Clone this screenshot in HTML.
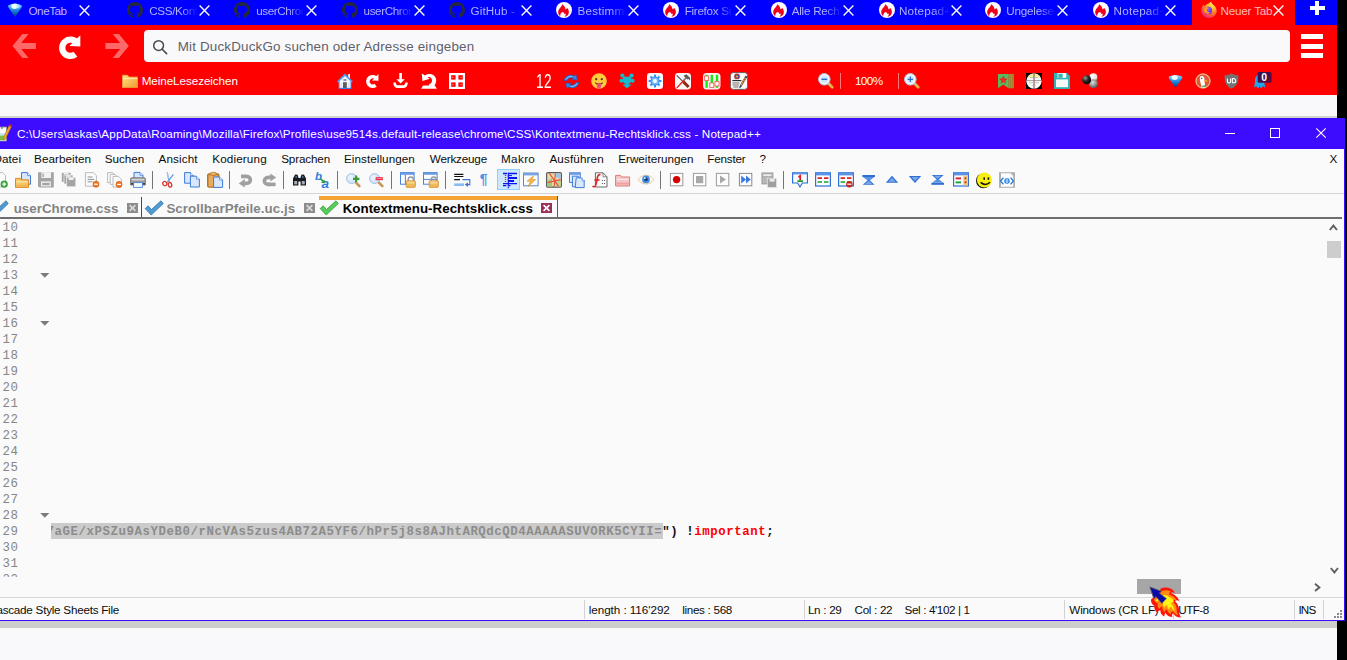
<!DOCTYPE html>
<html lang="de">
<head>
<meta charset="utf-8">
<title>Kontextmenu-Rechtsklick.css - Notepad++</title>
<style>
html,body{margin:0;padding:0;}
body{width:1347px;height:660px;overflow:hidden;position:relative;background:#f9f9fb;font-family:"Liberation Sans","DejaVu Sans",sans-serif;}
div,span.a,svg{position:absolute;white-space:nowrap;}
svg{overflow:visible;}
#black{left:1337px;top:0;width:10px;height:660px;background:#000;}
#tabbar{left:0;top:0;width:1337px;height:25px;background:#0000ff;}
#navbar{left:0;top:25px;width:1337px;height:70px;background:#ff0000;}
#seltab{left:1192px;top:0;width:103px;height:25px;background:#ff0000;}
.tl{top:0;height:23px;line-height:22px;font-size:11.7px;letter-spacing:-0.42px;overflow:hidden;}
#urlbar{left:144px;top:30px;width:1146px;height:32px;background:#f9f9fb;border-radius:4px;}
#gapline{left:0;top:116px;width:1337px;height:2px;background:#d2d2cc;}
#npp{left:0;top:118px;width:1345px;height:503px;background:#fafafa;}
#npp-title{left:0;top:118px;width:1345px;height:31px;background:#3d0cff;}
#below{left:0;top:621px;width:1337px;height:7px;background:#cdcdcd;}
.ln{left:2.4px;width:30px;line-height:16px;font-family:"Liberation Mono","DejaVu Sans Mono",monospace;font-size:12.4px;letter-spacing:0.56px;color:#868686;overflow:hidden;}
#code{height:16px;line-height:16px;font-family:"Liberation Mono","DejaVu Sans Mono",monospace;font-size:12.4px;letter-spacing:0.56px;font-weight:bold;color:#8c8c8c;}
#code .k{color:#101020;} #code .r{color:#ff0000;}
</style>
</head>
<body>
<div id="black"></div><div id="tabbar"></div><div id="navbar"></div><div id="seltab"></div>
<svg style="left:6.5px;top:2px;" width="16" height="16" viewBox="0 0 16 16"><defs><linearGradient id="ot6" x1="0" y1="0" x2="0" y2="1"><stop offset="0" stop-color="#7fe3ff"/><stop offset="0.45" stop-color="#1e8fe8"/><stop offset="1" stop-color="#06307a"/></linearGradient></defs>
<path d="M1.3 3.4 Q8 -0.6 14.7 3.4 Q15.3 4.2 14.6 5.2 L9 13.4 L8.2 15.2 L7 13.4 L1.4 5.2 Q0.7 4.2 1.3 3.4Z" fill="url(#ot6)"/>
<ellipse cx="7.6" cy="4.3" rx="3.3" ry="2.6" fill="#fff" opacity="0.92"/><ellipse cx="11" cy="4.6" rx="2" ry="1.8" fill="#bfe9ff" opacity="0.7"/></svg>
<div class="tl" style="left:28.5px;width:48.5px;color:#c2b4ff;letter-spacing:-0.48px;">OneTab</div>
<svg style="left:78.5px;top:5px;" width="11" height="11" viewBox="0 0 11 11"><path d="M0.6 0.6L10.4 10.4M10.4 0.6L0.6 10.4" stroke="#fff" stroke-width="1.35" fill="none"/></svg>
<svg style="left:127px;top:2px;" width="16" height="16" viewBox="0 0 16 16"><path d="M8 0C3.58 0 0 3.58 0 8c0 3.54 2.29 6.53 5.47 7.59.4.07.55-.17.55-.38 0-.19-.01-.82-.01-1.49-2.01.37-2.53-.49-2.69-.94-.09-.23-.48-.94-.82-1.13-.28-.15-.68-.52-.01-.53.63-.01 1.08.58 1.23.82.72 1.21 1.87.87 2.33.66.07-.52.28-.87.51-1.07-1.78-.2-3.64-.89-3.64-3.95 0-.87.31-1.59.82-2.15-.08-.2-.36-1.02.08-2.12 0 0 .67-.21 2.2.82.64-.18 1.32-.27 2-.27.68 0 1.36.09 2 .27 1.53-1.04 2.2-.82 2.2-.82.44 1.1.16 1.92.08 2.12.51.56.82 1.27.82 2.15 0 3.07-1.87 3.75-3.65 3.95.29.25.54.73.54 1.48 0 1.07-.01 1.93-.01 2.2 0 .21.15.46.55.38A8.013 8.013 0 0016 8c0-4.42-3.58-8-8-8z" fill="#26283a"/></svg>
<div class="tl" style="left:149.3px;width:48.2px;color:#b0b0ff;letter-spacing:-0.367px;-webkit-mask-image:linear-gradient(to right,#000 68%,rgba(0,0,0,0.02) 100%);mask-image:linear-gradient(to right,#000 68%,rgba(0,0,0,0.02) 100%);">CSS/Kontextmenu</div>
<svg style="left:199px;top:5px;" width="11" height="11" viewBox="0 0 11 11"><path d="M0.6 0.6L10.4 10.4M10.4 0.6L0.6 10.4" stroke="#fff" stroke-width="1.35" fill="none"/></svg>
<svg style="left:234px;top:2px;" width="16" height="16" viewBox="0 0 16 16"><path d="M8 0C3.58 0 0 3.58 0 8c0 3.54 2.29 6.53 5.47 7.59.4.07.55-.17.55-.38 0-.19-.01-.82-.01-1.49-2.01.37-2.53-.49-2.69-.94-.09-.23-.48-.94-.82-1.13-.28-.15-.68-.52-.01-.53.63-.01 1.08.58 1.23.82.72 1.21 1.87.87 2.33.66.07-.52.28-.87.51-1.07-1.78-.2-3.64-.89-3.64-3.95 0-.87.31-1.59.82-2.15-.08-.2-.36-1.02.08-2.12 0 0 .67-.21 2.2.82.64-.18 1.32-.27 2-.27.68 0 1.36.09 2 .27 1.53-1.04 2.2-.82 2.2-.82.44 1.1.16 1.92.08 2.12.51.56.82 1.27.82 2.15 0 3.07-1.87 3.75-3.65 3.95.29.25.54.73.54 1.48 0 1.07-.01 1.93-.01 2.2 0 .21.15.46.55.38A8.013 8.013 0 0016 8c0-4.42-3.58-8-8-8z" fill="#26283a"/></svg>
<div class="tl" style="left:256.2px;width:48.3px;color:#b0b0ff;letter-spacing:-0.417px;-webkit-mask-image:linear-gradient(to right,#000 68%,rgba(0,0,0,0.02) 100%);mask-image:linear-gradient(to right,#000 68%,rgba(0,0,0,0.02) 100%);">userChrome.css</div>
<svg style="left:306px;top:5px;" width="11" height="11" viewBox="0 0 11 11"><path d="M0.6 0.6L10.4 10.4M10.4 0.6L0.6 10.4" stroke="#fff" stroke-width="1.35" fill="none"/></svg>
<svg style="left:341.5px;top:2px;" width="16" height="16" viewBox="0 0 16 16"><path d="M8 0C3.58 0 0 3.58 0 8c0 3.54 2.29 6.53 5.47 7.59.4.07.55-.17.55-.38 0-.19-.01-.82-.01-1.49-2.01.37-2.53-.49-2.69-.94-.09-.23-.48-.94-.82-1.13-.28-.15-.68-.52-.01-.53.63-.01 1.08.58 1.23.82.72 1.21 1.87.87 2.33.66.07-.52.28-.87.51-1.07-1.78-.2-3.64-.89-3.64-3.95 0-.87.31-1.59.82-2.15-.08-.2-.36-1.02.08-2.12 0 0 .67-.21 2.2.82.64-.18 1.32-.27 2-.27.68 0 1.36.09 2 .27 1.53-1.04 2.2-.82 2.2-.82.44 1.1.16 1.92.08 2.12.51.56.82 1.27.82 2.15 0 3.07-1.87 3.75-3.65 3.95.29.25.54.73.54 1.48 0 1.07-.01 1.93-.01 2.2 0 .21.15.46.55.38A8.013 8.013 0 0016 8c0-4.42-3.58-8-8-8z" fill="#26283a"/></svg>
<div class="tl" style="left:363.6px;width:48.4px;color:#b0b0ff;letter-spacing:-0.417px;-webkit-mask-image:linear-gradient(to right,#000 68%,rgba(0,0,0,0.02) 100%);mask-image:linear-gradient(to right,#000 68%,rgba(0,0,0,0.02) 100%);">userChrome.css</div>
<svg style="left:413.5px;top:5px;" width="11" height="11" viewBox="0 0 11 11"><path d="M0.6 0.6L10.4 10.4M10.4 0.6L0.6 10.4" stroke="#fff" stroke-width="1.35" fill="none"/></svg>
<svg style="left:449px;top:2px;" width="16" height="16" viewBox="0 0 16 16"><path d="M8 0C3.58 0 0 3.58 0 8c0 3.54 2.29 6.53 5.47 7.59.4.07.55-.17.55-.38 0-.19-.01-.82-.01-1.49-2.01.37-2.53-.49-2.69-.94-.09-.23-.48-.94-.82-1.13-.28-.15-.68-.52-.01-.53.63-.01 1.08.58 1.23.82.72 1.21 1.87.87 2.33.66.07-.52.28-.87.51-1.07-1.78-.2-3.64-.89-3.64-3.95 0-.87.31-1.59.82-2.15-.08-.2-.36-1.02.08-2.12 0 0 .67-.21 2.2.82.64-.18 1.32-.27 2-.27.68 0 1.36.09 2 .27 1.53-1.04 2.2-.82 2.2-.82.44 1.1.16 1.92.08 2.12.51.56.82 1.27.82 2.15 0 3.07-1.87 3.75-3.65 3.95.29.25.54.73.54 1.48 0 1.07-.01 1.93-.01 2.2 0 .21.15.46.55.38A8.013 8.013 0 0016 8c0-4.42-3.58-8-8-8z" fill="#26283a"/></svg>
<div class="tl" style="left:470.5px;width:49.0px;color:#b0b0ff;letter-spacing:0.12px;-webkit-mask-image:linear-gradient(to right,#000 68%,rgba(0,0,0,0.02) 100%);mask-image:linear-gradient(to right,#000 68%,rgba(0,0,0,0.02) 100%);">GitHub - Endor8</div>
<svg style="left:521px;top:5px;" width="11" height="11" viewBox="0 0 11 11"><path d="M0.6 0.6L10.4 10.4M10.4 0.6L0.6 10.4" stroke="#fff" stroke-width="1.35" fill="none"/></svg>
<svg style="left:556px;top:2px;" width="16" height="16" viewBox="0 0 16 16"><circle cx="8" cy="8" r="8" fill="#fdfdff"/>
<path d="M6.3 2.2 C8.4 3.6 9.6 5.6 9.4 7.4 C10 6.8 10.9 6.6 11.3 5.9 C12.6 7.6 13.4 9.8 12.6 11.8 C11.9 13.6 10.1 14.8 8.2 14.9 C9.6 13.9 10 12.6 9.5 11.4 L8.3 12 C8.2 10.9 7.4 10.1 6.4 10 C5 10.9 4 12.6 4.3 14.2 C2.6 13 1.9 11 2.3 9 C2.8 6.4 5.6 5.2 6.3 2.2Z" fill="#f00018"/></svg>
<div class="tl" style="left:577.4px;width:49.1px;color:#b0b0ff;letter-spacing:0.25px;-webkit-mask-image:linear-gradient(to right,#000 68%,rgba(0,0,0,0.02) 100%);mask-image:linear-gradient(to right,#000 68%,rgba(0,0,0,0.02) 100%);">Bestimmte Eintr</div>
<svg style="left:628px;top:5px;" width="11" height="11" viewBox="0 0 11 11"><path d="M0.6 0.6L10.4 10.4M10.4 0.6L0.6 10.4" stroke="#fff" stroke-width="1.35" fill="none"/></svg>
<svg style="left:663px;top:2px;" width="16" height="16" viewBox="0 0 16 16"><circle cx="8" cy="8" r="8" fill="#fdfdff"/>
<path d="M6.3 2.2 C8.4 3.6 9.6 5.6 9.4 7.4 C10 6.8 10.9 6.6 11.3 5.9 C12.6 7.6 13.4 9.8 12.6 11.8 C11.9 13.6 10.1 14.8 8.2 14.9 C9.6 13.9 10 12.6 9.5 11.4 L8.3 12 C8.2 10.9 7.4 10.1 6.4 10 C5 10.9 4 12.6 4.3 14.2 C2.6 13 1.9 11 2.3 9 C2.8 6.4 5.6 5.2 6.3 2.2Z" fill="#f00018"/></svg>
<div class="tl" style="left:684.7px;width:48.8px;color:#b0b0ff;letter-spacing:-0.3px;-webkit-mask-image:linear-gradient(to right,#000 68%,rgba(0,0,0,0.02) 100%);mask-image:linear-gradient(to right,#000 68%,rgba(0,0,0,0.02) 100%);">Firefox Suche</div>
<svg style="left:735px;top:5px;" width="11" height="11" viewBox="0 0 11 11"><path d="M0.6 0.6L10.4 10.4M10.4 0.6L0.6 10.4" stroke="#fff" stroke-width="1.35" fill="none"/></svg>
<svg style="left:771px;top:2px;" width="16" height="16" viewBox="0 0 16 16"><circle cx="8" cy="8" r="8" fill="#fdfdff"/>
<path d="M6.3 2.2 C8.4 3.6 9.6 5.6 9.4 7.4 C10 6.8 10.9 6.6 11.3 5.9 C12.6 7.6 13.4 9.8 12.6 11.8 C11.9 13.6 10.1 14.8 8.2 14.9 C9.6 13.9 10 12.6 9.5 11.4 L8.3 12 C8.2 10.9 7.4 10.1 6.4 10 C5 10.9 4 12.6 4.3 14.2 C2.6 13 1.9 11 2.3 9 C2.8 6.4 5.6 5.2 6.3 2.2Z" fill="#f00018"/></svg>
<div class="tl" style="left:791.7px;width:49.8px;color:#b0b0ff;letter-spacing:-0.25px;-webkit-mask-image:linear-gradient(to right,#000 68%,rgba(0,0,0,0.02) 100%);mask-image:linear-gradient(to right,#000 68%,rgba(0,0,0,0.02) 100%);">Alle Rechtsklick</div>
<svg style="left:843px;top:5px;" width="11" height="11" viewBox="0 0 11 11"><path d="M0.6 0.6L10.4 10.4M10.4 0.6L0.6 10.4" stroke="#fff" stroke-width="1.35" fill="none"/></svg>
<svg style="left:878.5px;top:2px;" width="16" height="16" viewBox="0 0 16 16"><circle cx="8" cy="8" r="8" fill="#fdfdff"/>
<path d="M6.3 2.2 C8.4 3.6 9.6 5.6 9.4 7.4 C10 6.8 10.9 6.6 11.3 5.9 C12.6 7.6 13.4 9.8 12.6 11.8 C11.9 13.6 10.1 14.8 8.2 14.9 C9.6 13.9 10 12.6 9.5 11.4 L8.3 12 C8.2 10.9 7.4 10.1 6.4 10 C5 10.9 4 12.6 4.3 14.2 C2.6 13 1.9 11 2.3 9 C2.8 6.4 5.6 5.2 6.3 2.2Z" fill="#f00018"/></svg>
<div class="tl" style="left:898.9px;width:50.1px;color:#b0b0ff;letter-spacing:0.167px;-webkit-mask-image:linear-gradient(to right,#000 68%,rgba(0,0,0,0.02) 100%);mask-image:linear-gradient(to right,#000 68%,rgba(0,0,0,0.02) 100%);">Notepad++ und</div>
<svg style="left:950.5px;top:5px;" width="11" height="11" viewBox="0 0 11 11"><path d="M0.6 0.6L10.4 10.4M10.4 0.6L0.6 10.4" stroke="#fff" stroke-width="1.35" fill="none"/></svg>
<svg style="left:985px;top:2px;" width="16" height="16" viewBox="0 0 16 16"><circle cx="8" cy="8" r="8" fill="#fdfdff"/>
<path d="M6.3 2.2 C8.4 3.6 9.6 5.6 9.4 7.4 C10 6.8 10.9 6.6 11.3 5.9 C12.6 7.6 13.4 9.8 12.6 11.8 C11.9 13.6 10.1 14.8 8.2 14.9 C9.6 13.9 10 12.6 9.5 11.4 L8.3 12 C8.2 10.9 7.4 10.1 6.4 10 C5 10.9 4 12.6 4.3 14.2 C2.6 13 1.9 11 2.3 9 C2.8 6.4 5.6 5.2 6.3 2.2Z" fill="#f00018"/></svg>
<div class="tl" style="left:1006.3px;width:49.2px;color:#b0b0ff;letter-spacing:-0.229px;-webkit-mask-image:linear-gradient(to right,#000 68%,rgba(0,0,0,0.02) 100%);mask-image:linear-gradient(to right,#000 68%,rgba(0,0,0,0.02) 100%);">Ungelesene Beitr</div>
<svg style="left:1057px;top:5px;" width="11" height="11" viewBox="0 0 11 11"><path d="M0.6 0.6L10.4 10.4M10.4 0.6L0.6 10.4" stroke="#fff" stroke-width="1.35" fill="none"/></svg>
<svg style="left:1092.5px;top:2px;" width="16" height="16" viewBox="0 0 16 16"><circle cx="8" cy="8" r="8" fill="#fdfdff"/>
<path d="M6.3 2.2 C8.4 3.6 9.6 5.6 9.4 7.4 C10 6.8 10.9 6.6 11.3 5.9 C12.6 7.6 13.4 9.8 12.6 11.8 C11.9 13.6 10.1 14.8 8.2 14.9 C9.6 13.9 10 12.6 9.5 11.4 L8.3 12 C8.2 10.9 7.4 10.1 6.4 10 C5 10.9 4 12.6 4.3 14.2 C2.6 13 1.9 11 2.3 9 C2.8 6.4 5.6 5.2 6.3 2.2Z" fill="#f00018"/></svg>
<div class="tl" style="left:1113.6px;width:49.4px;color:#b0b0ff;letter-spacing:0.217px;-webkit-mask-image:linear-gradient(to right,#000 68%,rgba(0,0,0,0.02) 100%);mask-image:linear-gradient(to right,#000 68%,rgba(0,0,0,0.02) 100%);">Notepad++ und</div>
<svg style="left:1164.5px;top:5px;" width="11" height="11" viewBox="0 0 11 11"><path d="M0.6 0.6L10.4 10.4M10.4 0.6L0.6 10.4" stroke="#fff" stroke-width="1.35" fill="none"/></svg>
<svg style="left:1200.5px;top:2px;" width="16" height="16" viewBox="0 0 16 16"><defs><radialGradient id="fxa" cx="0.75" cy="0.1" r="1.05"><stop offset="0" stop-color="#fff44f"/><stop offset="0.3" stop-color="#ffbd2e"/><stop offset="0.62" stop-color="#ff6a2a"/><stop offset="1" stop-color="#e31587"/></radialGradient>
<radialGradient id="fxb" cx="0.5" cy="0.35" r="0.65"><stop offset="0" stop-color="#9059ff"/><stop offset="1" stop-color="#5b2bd6"/></radialGradient></defs>
<path d="M8.4 1 C9.2 0.2 9.8 -0.2 10.4 -0.2 C10.2 1.2 11.2 2 12.8 3.2 C15.2 5 16 7.6 15.6 10 C15 13.4 11.8 16 8 16 C3.6 16 0.2 12.6 0.2 8.4 C0.2 5.8 1.4 3.6 3 2.4 C3 3.2 3.2 3.8 3.6 4.2 C4.8 2.8 6.4 1.8 8.4 1Z" fill="url(#fxa)"/>
<circle cx="7.4" cy="8.4" r="3.7" fill="url(#fxb)"/>
<path d="M3.4 6.2 C4.8 5 7 5.2 8.4 6.2 C7 6.2 6.2 6.8 6 7.6 C5.6 9.2 7 10.6 9.2 10.4 C8 12 5.4 12.2 3.8 10.6 C2.7 9.4 2.6 7.4 3.4 6.2Z" fill="#ff9a2a"/></svg>
<div class="tl" style="left:1220.4px;width:54.6px;color:#ffb9b9;letter-spacing:-0.188px;">Neuer Tab</div>
<svg style="left:1272.5px;top:5px;" width="11" height="11" viewBox="0 0 11 11"><path d="M0.6 0.6L10.4 10.4M10.4 0.6L0.6 10.4" stroke="#fff" stroke-width="1.35" fill="none"/></svg>
<div style="left:1309.7px;top:5.8px;width:15px;height:4.1px;background:#fdfdff;"></div>
<div style="left:1315px;top:0.8px;width:4.4px;height:14px;background:#fdfdff;"></div>
<svg style="left:10px;top:32px;" width="30" height="28" viewBox="0 0 30 28"><path d="M2.5 14 L12.4 2 L18.6 2 L11.2 11 L25.9 11 L25.9 17 L11.2 17 L18.6 26 L12.4 26Z" fill="#ff6868"/></svg>
<svg style="left:102.5px;top:32px;" width="30" height="28" viewBox="0 0 30 28"><path d="M25.8 14 L15.9 2 L9.7 2 L17.1 11 L2.4 11 L2.4 17 L17.1 17 L9.7 26 L15.9 26Z" fill="#ff6868"/></svg>
<svg style="left:58.5px;top:35px;" width="22.0" height="24.0" viewBox="0 0 22 24"><path d="M17.84 7.77 A8.17 8.17 0 1 0 16.43 19.24" fill="none" stroke="#fdfdfd" stroke-width="6.25"/><path d="M21.3 0.2 L21.3 11.4 L10.4 11.1Z" fill="#fdfdfd"/></svg>
<div id="urlbar"></div>
<svg style="left:152px;top:39px;" width="16" height="16" viewBox="0 0 16 16"><circle cx="6.6" cy="6.6" r="4.9" fill="none" stroke="#4a4a55" stroke-width="1.5"/><path d="M10.2 10.2L14.6 14.6" stroke="#4a4a55" stroke-width="1.6" stroke-linecap="round"/></svg>
<div id="url" style="left:177.65px;top:30px;height:33px;line-height:33px;font-size:13.4px;color:#5f5f6a;letter-spacing:0.183px;font-weight:normal;">Mit DuckDuckGo suchen oder Adresse eingeben</div>
<div style="left:1301px;top:34px;width:22px;height:5.3px;background:#fff;"></div>
<div style="left:1301px;top:43.5px;width:22px;height:5.3px;background:#fff;"></div>
<div style="left:1301px;top:52.6px;width:22px;height:5.3px;background:#fff;"></div>
<svg style="left:122px;top:74px;" width="16" height="14" viewBox="0 0 16 14"><defs><linearGradient id="fo" x1="0" y1="0" x2="1" y2="1"><stop offset="0" stop-color="#ffe08a"/><stop offset="1" stop-color="#f09a2c"/></linearGradient></defs>
<path d="M0.5 1.2 L5.6 1.2 L6.8 3 L15.5 3 L15.5 13.5 L0.5 13.5Z" fill="url(#fo)" stroke="#e8a33a" stroke-width="0.8"/><path d="M0.8 4.6 L15.2 4.6" stroke="#fff3c4" stroke-width="0.8"/></svg>
<div id="bm" style="left:141.70px;top:72px;height:18px;line-height:18px;font-size:11.7px;color:#fff;letter-spacing:-0.080px;font-weight:normal;">MeineLesezeichen</div>
<svg style="left:337px;top:73px;" width="16" height="16" viewBox="0 0 16 16"><rect x="11.2" y="1" width="1.8" height="4.4" fill="#f4f8ff"/>
<path d="M2.2 7.8 L8 2.4 L13.8 7.8 L13.8 15.2 L2.2 15.2Z" fill="#f7f8fb"/>
<path d="M0.2 8.2 L8 0.6 L15.8 8.2 L14.8 9.4 L8 3 L1.2 9.4Z" fill="#45a2ff"/>
<rect x="6" y="9.2" width="3.8" height="6" fill="#585d66"/><rect x="6.4" y="6" width="3" height="2" fill="#8a95a6"/>
<rect x="3.4" y="9.6" width="1.6" height="5" fill="#dfe4ec"/><rect x="10.8" y="9.6" width="1.6" height="5" fill="#dfe4ec"/>
<path d="M1.8 15.4 H14.2" stroke="#2f86ea" stroke-width="1.1"/><path d="M2.2 8.4 V15.2 M13.8 8.4 V15.2" stroke="#6ab4ff" stroke-width="0.9"/></svg>
<svg style="left:366px;top:74px;" width="12.87" height="14.04" viewBox="0 0 22 24"><path d="M17.84 7.77 A8.17 8.17 0 1 0 16.43 19.24" fill="none" stroke="#fdfdfd" stroke-width="6.25"/><path d="M21.3 0.2 L21.3 11.4 L10.4 11.1Z" fill="#fdfdfd"/></svg>
<svg style="left:393px;top:73px;" width="15" height="15" viewBox="0 0 15 15"><path d="M6.3 0 H8.9 V6.2 H11.8 L7.6 10.6 L3.4 6.2 H6.3Z" fill="#fff"/><path d="M0.3 9.6 C0.3 13 2 14.9 4 14.9 H11 C13 14.9 14.8 13 14.8 9.6 H12.2 C12.2 11.4 11.4 12.3 10.4 12.3 H4.6 C3.6 12.3 2.9 11.4 2.9 9.6Z" fill="#fff"/></svg>
<svg style="left:421px;top:73px;" width="16" height="16" viewBox="0 0 16 16"><path d="M0.8 0.4 L1.4 8 L8.8 5.8 L6.6 4.4 C8.6 3.4 11 4.8 11 7.4 C11 9.4 9.8 10.6 8.2 11 L8.2 13 L12.8 13 C14.4 11.6 15.2 9.6 15.2 7.4 C15.2 1.8 9 -1 4 2.4Z" fill="#fff"/><path d="M0.2 15.8 L2 12.4 L14 12.4 L15.8 15.8Z" fill="#fff"/></svg>
<svg style="left:449px;top:73px;" width="16" height="16" viewBox="0 0 16 16"><rect width="16" height="16" fill="#fff"/><rect x="2.2" y="2.2" width="4.4" height="4.4" fill="#f00"/><rect x="9.4" y="2.2" width="4.4" height="4.4" fill="#f00"/><rect x="2.2" y="9.4" width="4.4" height="4.4" fill="#f00"/><rect x="9.4" y="9.4" width="4.4" height="4.4" fill="#f00"/><path d="M3.4 4.4 h1 M11.6 4.4 h1 M3.4 11.6 h1 M11.6 11.6 h1" stroke="#ffd0d0" stroke-width="0.9"/></svg>
<div id="t12" style="left:535.5px;top:70px;height:22px;line-height:22px;font-size:19.5px;color:#fff;transform-origin:0 50%;transform:scaleX(0.7);letter-spacing:0.5px;">12</div>
<svg style="left:562.5px;top:73.5px;" width="17" height="15" viewBox="0 0 17 15"><path d="M1 6.6 C1.6 2.8 5.4 0.6 9.2 1.2 L11.6 2 L12.8 0.4 L14.6 5.8 L9 5.8 L10.2 4.2 C7.6 3.2 4.8 4.2 4 6.6Z" fill="#2f86e6" stroke="#1b56b0" stroke-width="0.6"/>
<path d="M16 8.4 C15.4 12.2 11.6 14.4 7.8 13.8 L5.4 13 L4.2 14.6 L2.4 9.2 L8 9.2 L6.8 10.8 C9.4 11.8 12.2 10.8 13 8.4Z" fill="#2f86e6" stroke="#1b56b0" stroke-width="0.6"/>
<path d="M3 5.6 C4.2 3.2 6.8 2.2 9.4 2.6" stroke="#9fd0ff" stroke-width="0.9" fill="none"/><path d="M14 9.4 C12.8 11.8 10.2 12.8 7.6 12.4" stroke="#9fd0ff" stroke-width="0.9" fill="none"/></svg>
<svg style="left:591px;top:73px;" width="16" height="16" viewBox="0 0 16 16"><circle cx="8" cy="8" r="7.8" fill="#ffcb3d"/><circle cx="5.2" cy="6.2" r="1.15" fill="#5b3b14"/><circle cx="10.8" cy="6.2" r="1.15" fill="#5b3b14"/>
<path d="M3.8 9.2 Q8 11.4 12.2 9.2 Q11.6 11 10.4 11.6 L5.6 11.6 Q4.4 11 3.8 9.2Z" fill="#6b3a12"/>
<path d="M5.8 10.6 H10.2 V13.2 Q10.2 15.6 8 15.6 Q5.8 15.6 5.8 13.2Z" fill="#f0557a"/><path d="M8 11 V13.6" stroke="#d03a62" stroke-width="0.7"/></svg>
<svg style="left:619px;top:73px;" width="16" height="16" viewBox="0 0 16 16"><path d="M4.4 3.4 H11.6 L12.6 7 L11 10.4 H9.8 V11.6 H12.6 L8 15.6 L3.4 11.6 H6.2 V10.4 H5 L3.4 7Z" fill="#12bccc"/>
<circle cx="3.4" cy="2.6" r="2.1" fill="#12bccc"/><circle cx="12.6" cy="2.6" r="2.1" fill="#12bccc"/><circle cx="2.4" cy="7.8" r="2" fill="#12bccc"/><circle cx="13.6" cy="7.8" r="2" fill="#12bccc"/>
<path d="M6.6 3.4 L8 1.8 L9.4 3.4Z" fill="#f00"/></svg>
<svg style="left:647px;top:73px;" width="16" height="16" viewBox="0 0 16 16"><rect width="16" height="16" rx="3.2" fill="#f6f9ff"/><rect x="7" y="1.6" width="2" height="3" fill="#3a8eea" transform="rotate(0 8 8)"/><rect x="7" y="1.6" width="2" height="3" fill="#3a8eea" transform="rotate(45 8 8)"/><rect x="7" y="1.6" width="2" height="3" fill="#3a8eea" transform="rotate(90 8 8)"/><rect x="7" y="1.6" width="2" height="3" fill="#3a8eea" transform="rotate(135 8 8)"/><rect x="7" y="1.6" width="2" height="3" fill="#3a8eea" transform="rotate(180 8 8)"/><rect x="7" y="1.6" width="2" height="3" fill="#3a8eea" transform="rotate(225 8 8)"/><rect x="7" y="1.6" width="2" height="3" fill="#3a8eea" transform="rotate(270 8 8)"/><rect x="7" y="1.6" width="2" height="3" fill="#3a8eea" transform="rotate(315 8 8)"/><circle cx="8" cy="8" r="4.6" fill="#3a8eea"/><circle cx="8" cy="8" r="3.6" fill="#7fbcff"/><circle cx="8" cy="8" r="1.9" fill="#fff"/></svg>
<svg style="left:675px;top:72.8px;" width="16" height="16.4" viewBox="0 0 16 16.4"><rect width="16" height="16.4" rx="3.4" fill="#f9f9fb"/>
<path d="M2 2.6 L8 8.6" stroke="#585858" stroke-width="1.3" stroke-linecap="round"/><path d="M8.2 8.6 L13.6 14" stroke="#8c2a12" stroke-width="3"/>
<path d="M9.6 6.6 L2.2 14.6" stroke="#e8281c" stroke-width="1.4" stroke-linecap="round"/><path d="M9 7.2 L11.2 4.8" stroke="#777" stroke-width="1.4"/>
<path d="M8.6 2.8 L11.4 1.2 L15 4.8 L15.2 7.6 L13.6 6 L12.6 6.6 L9.4 3.8Z" fill="#5c5c5c"/></svg>
<svg style="left:702.5px;top:72.8px;" width="17.5" height="16.4" viewBox="0 0 17.5 16.4"><rect width="17.5" height="16.4" rx="3.6" fill="#fbeef0"/>
<rect x="2.4" y="1.8" width="2.4" height="13" fill="#12ec12"/><rect x="7.6" y="1.8" width="2.4" height="13" fill="#12ec12"/><rect x="12.8" y="1.8" width="2.4" height="13" fill="#12ec12"/>
<rect x="1.6" y="3" width="4" height="4.4" fill="#fff" stroke="#f06060" stroke-width="0.9"/><rect x="6.8" y="10" width="4" height="4.4" fill="#fff" stroke="#f06060" stroke-width="0.9"/><rect x="12" y="8.6" width="4" height="4.4" fill="#fff" stroke="#f06060" stroke-width="0.9"/></svg>
<svg style="left:730.2px;top:72px;" width="18" height="18" viewBox="0 0 18 18"><rect x="0.4" y="0.6" width="17.2" height="16.8" rx="3" fill="#fbfbfb" stroke="#4a4a4a" stroke-width="0.8"/>
<circle cx="7" cy="4.4" r="2.9" fill="#b83a3a"/><path d="M5 3 L9 6 M9 3 L5 6" stroke="#3a58b0" stroke-width="1.1"/><circle cx="7" cy="4.4" r="1" fill="#e8b040"/>
<path d="M2.4 8.6 H11.4" stroke="#222" stroke-width="1.1"/><path d="M2.4 11 H9.6 M2.4 13 H9 M3.4 15 H8.4" stroke="#707070" stroke-width="1"/>
<path d="M15.6 3.6 L17.4 4.8 L11.2 15 L9.2 16.4 L9.6 14Z" fill="#3a3a4a"/><path d="M15 5.4 L16.2 6.2 L11.4 13.8 L10.4 13Z" fill="#e8b030"/><path d="M14 7.2 L15.2 8 M12.8 9.2 L14 10 M11.6 11.2 L12.8 12" stroke="#c03030" stroke-width="0.9"/></svg>
<svg style="left:818px;top:73px;" width="16" height="16" viewBox="0 0 16 16"><path d="M10.6 10.6 L14.2 14.2" stroke="#e6b648" stroke-width="2.8" stroke-linecap="round"/><path d="M9.8 9.8 L11.4 11.4" stroke="#c9b48a" stroke-width="2.6"/>
<circle cx="6.3" cy="6.3" r="5.8" fill="#e6f2ff" stroke="#a8c0dc" stroke-width="1"/><circle cx="6.3" cy="6.3" r="4.3" fill="#d2e9ff" stroke="#fff" stroke-width="0.7"/><path d="M3.4 6.3 H9.2" stroke="#2a6cc8" stroke-width="1.5"/></svg>
<div style="left:840.3px;top:73px;width:1px;height:16px;background:#ff7a7a;"></div>
<div id="zoom" style="left:854.90px;top:72px;height:18px;line-height:18px;font-size:11.7px;color:#fff;letter-spacing:-0.533px;font-weight:normal;">100%</div>
<div style="left:898.2px;top:73px;width:1px;height:16px;background:#ff7a7a;"></div>
<svg style="left:904px;top:73px;" width="16" height="16" viewBox="0 0 16 16"><path d="M10.6 10.6 L14.2 14.2" stroke="#e6b648" stroke-width="2.8" stroke-linecap="round"/><path d="M9.8 9.8 L11.4 11.4" stroke="#c9b48a" stroke-width="2.6"/>
<circle cx="6.3" cy="6.3" r="5.8" fill="#e6f2ff" stroke="#a8c0dc" stroke-width="1"/><circle cx="6.3" cy="6.3" r="4.3" fill="#d2e9ff" stroke="#fff" stroke-width="0.7"/><path d="M3.6 6.3 H9 M6.3 3.6 V9" stroke="#2a6cc8" stroke-width="1.3"/></svg>
<svg style="left:998px;top:74px;" width="16" height="14.4" viewBox="0 0 16 14.4"><path d="M0 0 H10.6 V14.2 L5.3 10.6 L0 14.2Z" fill="#5cb85c"/><rect x="10.6" y="0" width="5.2" height="14.2" fill="#5cb85c"/>
<rect x="11.6" y="0" width="1.4" height="14.2" fill="#a5802c"/><rect x="13.8" y="0" width="1.2" height="14.2" fill="#a5802c"/>
<path d="M5.3 1.6 L6.5 4.6 L9.6 4.7 L7.2 6.7 L8 9.7 L5.3 8 L2.6 9.7 L3.4 6.7 L1 4.7 L4.1 4.6Z" fill="#f01818"/><path d="M5.3 3.9 L5.9 5.4 L7.4 5.5 L6.2 6.5 L6.6 8 L5.3 7.2 L4 8 L4.4 6.5 L3.2 5.5 L4.7 5.4Z" fill="#e33"/></svg>
<svg style="left:1026px;top:73px;" width="16" height="16" viewBox="0 0 16 16"><rect width="16" height="16" fill="#060606"/><circle cx="8" cy="8.2" r="7.6" fill="#fafafa"/>
<path d="M1.4 4.4 A7.6 7.6 0 0 1 14.6 4.4Z" fill="#f4f0a0"/>
<path d="M8 0.4 V16" stroke="#5a3a3a" stroke-width="0.9"/><path d="M0.6 7.6 H15.4" stroke="#8a6a6a" stroke-width="0.7"/>
<path d="M4 4.6 H12 M3 9.8 H13 M6 12.2 H10" stroke="#b09a9a" stroke-width="0.6"/></svg>
<svg style="left:1054px;top:73px;" width="16" height="16" viewBox="0 0 16 16"><path d="M0 0 H13 L16 3 V16 H0Z" fill="#2fb4b8"/><rect x="2" y="6.4" width="12" height="7.8" fill="#f7fafa"/>
<rect x="3.6" y="0" width="8.6" height="4.8" fill="#f7fafa"/><rect x="4.4" y="0.8" width="4.2" height="4" fill="#2fb4b8"/><rect x="9" y="0" width="1" height="4.8" fill="#2fb4b8" opacity="0"/></svg>
<svg style="left:1082px;top:73px;" width="17" height="16" viewBox="0 0 17 16"><defs><radialGradient id="b1" cx="0.35" cy="0.3" r="0.7"><stop offset="0" stop-color="#9a9a9a"/><stop offset="0.5" stop-color="#2a2a2a"/><stop offset="1" stop-color="#050505"/></radialGradient>
<radialGradient id="b2" cx="0.4" cy="0.35" r="0.7"><stop offset="0" stop-color="#fff"/><stop offset="0.7" stop-color="#e8e0e0"/><stop offset="1" stop-color="#a8a0a0"/></radialGradient>
<radialGradient id="b3" cx="0.4" cy="0.35" r="0.7"><stop offset="0" stop-color="#e0e0e0"/><stop offset="0.6" stop-color="#8a8a8a"/><stop offset="1" stop-color="#4a4a4a"/></radialGradient></defs>
<circle cx="11.4" cy="4.2" r="4" fill="url(#b2)"/><circle cx="11.6" cy="10.8" r="4.5" fill="url(#b3)"/><circle cx="4.6" cy="6.8" r="4.5" fill="url(#b1)"/></svg>
<svg style="left:1168px;top:73.5px;" width="15" height="15" viewBox="0 0 15 15"><defs><linearGradient id="ot2" x1="0" y1="0" x2="0" y2="1"><stop offset="0" stop-color="#7fe3ff"/><stop offset="0.45" stop-color="#1e8fe8"/><stop offset="1" stop-color="#06307a"/></linearGradient></defs>
<path d="M1 2.6 Q7.5 -0.8 14 2.6 Q14.6 3.4 13.9 4.4 L8.4 12.6 L7.6 14.6 L6.6 12.6 L1.1 4.4 Q0.4 3.4 1 2.6Z" fill="url(#ot2)"/><ellipse cx="6.6" cy="3.6" rx="3.2" ry="2.4" fill="#fff" opacity="0.9"/></svg>
<svg style="left:1195px;top:73px;" width="16" height="16" viewBox="0 0 16 16"><circle cx="8" cy="8" r="7.8" fill="#de5833"/><circle cx="8" cy="8" r="7" fill="none" stroke="#ffd9c8" stroke-width="0.8"/>
<path d="M5.2 3.6 C6 2.6 8.2 2.6 9 4.2 C9.8 5.8 9.4 8 9.8 10 L10.2 14.6 L6.6 14.8 C6.6 11.8 4.6 8.6 4.8 6 C4.8 5 4.8 4.2 5.2 3.6Z" fill="#fdfdfd"/>
<path d="M9 7.6 C10.6 7 12.6 7 12.8 7.8 C12.8 8.6 10.6 8.6 9.4 9Z" fill="#f6a623"/><circle cx="6.6" cy="5.4" r="0.7" fill="#2b4f8e"/>
<path d="M7 13 C8 12.2 10.4 12 11 12.6 C11 13.6 9 14.2 7.2 14.2Z" fill="#4fb84a"/></svg>
<svg style="left:1224px;top:73px;" width="15" height="16" viewBox="0 0 15 16"><path d="M7.5 0.2 C9.4 1.6 11.8 2.2 14.4 2.2 C14.8 8.6 13 13 7.5 15.8 C2 13 0.2 8.6 0.6 2.2 C3.2 2.2 5.6 1.6 7.5 0.2Z" fill="#737373"/>
<path d="M3.4 5.6 V8.4 C3.4 10.4 6.6 10.4 6.6 8.4 V5.6" fill="none" stroke="#fff" stroke-width="1.1"/>
<path d="M8.4 5.6 V9.8 H9.6 C12.4 9.8 12.4 5.6 9.6 5.6Z" fill="none" stroke="#fff" stroke-width="1.1"/></svg>
<svg style="left:1252.5px;top:72px;" width="19" height="17" viewBox="0 0 19 17"><defs><linearGradient id="gb" x1="0" y1="0" x2="1" y2="1"><stop offset="0" stop-color="#2c1458"/><stop offset="1" stop-color="#640a36"/></linearGradient></defs>
<path d="M1 15.4 C1.6 13 2 10.6 2 8.4 C2 4.8 4 2.8 6.6 2.8 C9.2 2.8 11.2 4.8 11.2 8.4 C11.2 10.6 11.6 13 12.4 15.4 C11.4 15.4 10.6 14.8 10 14 C9.4 15.2 8.6 16 7.8 16.2 C7.2 15.4 6.8 14.8 6.6 14 C6.4 14.8 6 15.4 5.4 16.2 C4.6 16 3.8 15.2 3.2 14 C2.6 14.8 1.8 15.4 1 15.4Z" fill="#1ea7ee"/>
<rect x="4.6" y="0" width="14" height="10.8" rx="1.6" fill="url(#gb)"/></svg>
<div style="left:1257.1px;top:71.5px;width:14px;height:11px;line-height:11px;font-size:10.5px;font-weight:bold;color:#fff;text-align:center;">0</div>
<div id="gapline"></div><div id="below"></div><div id="npp"></div><div id="npp-title"></div>
<svg style="left:-8px;top:124px;" width="20" height="18" viewBox="0 0 20 18"><rect x="1" y="3" width="13.4" height="14" fill="#fbfbfb" stroke="#8a8a8a" stroke-width="0.8"/><rect x="2" y="9" width="11.4" height="7" fill="#7ac04a"/><rect x="2" y="9" width="11.4" height="2.6" fill="#c8e6f4"/><path d="M4 3 v2 M7 3 v2 M10 3 v2" stroke="#555" stroke-width="1"/><path d="M17.4 1 L11.6 13.2 L11 16 L13.6 14.4 L19.6 2.2Z" fill="#f4a820" stroke="#b06a10" stroke-width="0.5"/><circle cx="18.6" cy="1.6" r="1.3" fill="#c02818"/></svg>
<div id="title" style="left:16.95px;top:118px;height:31px;line-height:31px;font-size:11.7px;color:#fff;letter-spacing:0.130px;font-weight:normal;">C:\Users\askas\AppData\Roaming\Mozilla\Firefox\Profiles\use9514s.default-release\chrome\CSS\Kontextmenu-Rechtsklick.css - Notepad++</div>
<div style="left:1225px;top:133px;width:10px;height:1px;background:#fff;"></div>
<div style="left:1270px;top:128px;width:10px;height:10px;background:transparent;border:1px solid #fff;box-sizing:border-box;"></div>
<svg style="left:1316px;top:128px;" width="10" height="10" viewBox="0 0 10 10"><path d="M0.3 0.3 L9.7 9.7 M9.7 0.3 L0.3 9.7" stroke="#fff" stroke-width="1.1"/></svg>
<div id="m0" style="right:1325.95px;top:147.7px;height:21px;line-height:21px;font-size:11.7px;color:#0c0c0c;letter-spacing:0.050px;font-weight:normal;">Datei</div>
<div id="m1" style="left:34.10px;top:147.7px;height:21px;line-height:21px;font-size:11.7px;color:#0c0c0c;letter-spacing:0.044px;font-weight:normal;">Bearbeiten</div>
<div id="m2" style="left:104.70px;top:147.7px;height:21px;line-height:21px;font-size:11.7px;color:#0c0c0c;letter-spacing:-0.040px;font-weight:normal;">Suchen</div>
<div id="m3" style="left:158.60px;top:147.7px;height:21px;line-height:21px;font-size:11.7px;color:#0c0c0c;letter-spacing:0.100px;font-weight:normal;">Ansicht</div>
<div id="m4" style="left:212.25px;top:147.7px;height:21px;line-height:21px;font-size:11.7px;color:#0c0c0c;letter-spacing:0.137px;font-weight:normal;">Kodierung</div>
<div id="m5" style="left:281.20px;top:147.7px;height:21px;line-height:21px;font-size:11.7px;color:#0c0c0c;letter-spacing:-0.143px;font-weight:normal;">Sprachen</div>
<div id="m6" style="left:343.90px;top:147.7px;height:21px;line-height:21px;font-size:11.7px;color:#0c0c0c;letter-spacing:0.067px;font-weight:normal;">Einstellungen</div>
<div id="m7" style="left:429.75px;top:147.7px;height:21px;line-height:21px;font-size:11.7px;color:#0c0c0c;letter-spacing:-0.188px;font-weight:normal;">Werkzeuge</div>
<div id="m8" style="left:501.00px;top:147.7px;height:21px;line-height:21px;font-size:11.7px;color:#0c0c0c;letter-spacing:0.350px;font-weight:normal;">Makro</div>
<div id="m9" style="left:549.40px;top:147.7px;height:21px;line-height:21px;font-size:11.7px;color:#0c0c0c;letter-spacing:0.125px;font-weight:normal;">Ausführen</div>
<div id="m10" style="left:618.20px;top:147.7px;height:21px;line-height:21px;font-size:11.7px;color:#0c0c0c;letter-spacing:0.000px;font-weight:normal;">Erweiterungen</div>
<div id="m11" style="left:707.30px;top:147.7px;height:21px;line-height:21px;font-size:11.7px;color:#0c0c0c;letter-spacing:-0.200px;font-weight:normal;">Fenster</div>
<div id="m12" style="left:759.50px;top:147.7px;height:21px;line-height:21px;font-size:11.7px;color:#0c0c0c;letter-spacing:0.000px;font-weight:normal;">?</div>
<div id="mx" style="left:1329.50px;top:147.7px;height:21px;line-height:21px;font-size:11.7px;color:#0c0c0c;letter-spacing:0.000px;font-weight:normal;">X</div>
<svg style="left:-8px;top:172px;" width="16" height="16" viewBox="0 0 16 16"><path d="M2.5 0.6 h8 l3 3 v11.4 h-11Z" fill="#fbfbfb" stroke="#b4b4b4" stroke-width="0.9"/><circle cx="12.2" cy="12.2" r="3.6" fill="#3aa43a"/><path d="M10.2 12.2 h4 M12.2 10.2 v4" stroke="#fff" stroke-width="1.3"/></svg>
<svg style="left:15px;top:172px;" width="16" height="16" viewBox="0 0 16 16"><path d="M6.5 0.6 h6 l3 3 v8.6 h-9Z" fill="#d9e8fc" stroke="#3d7bdc" stroke-width="1"/><path d="M12.5 0.6 v3 h3" fill="#eef5ff" stroke="#3d7bdc" stroke-width="0.7"/><path d="M0.5 6.4 h4.8 l1.2 1.4 h7 v7.6 h-13Z" fill="#f7c76a" stroke="#dc8a28" stroke-width="1"/><path d="M1.2 9.8 h11.6" stroke="#fde7a8" stroke-width="1.2"/><path d="M1.2 13.6 h11.6" stroke="#f3b24c" stroke-width="1.6"/></svg>
<svg style="left:38px;top:172px;" width="16" height="16" viewBox="0 0 16 16"><path d="M0 0.2 h15.8 v15.4 h-14.2 l-1.6 -1.4Z" fill="#a4a4a4"/><rect x="3.4" y="0.2" width="9.6" height="5.8" fill="#f2f2f2"/><rect x="4.4" y="1.6" width="1.4" height="3.4" fill="#a4a4a4"/><rect x="3" y="9.4" width="9.8" height="5" fill="#f2f2f2"/><rect x="4.2" y="10.8" width="7.4" height="2.4" fill="#a4a4a4"/></svg>
<svg style="left:61px;top:172px;" width="16" height="16" viewBox="0 0 16 16"><rect x="0.8" y="0.8" width="9" height="9" fill="#a4a4a4"/><rect x="3" y="3" width="9" height="9" fill="#a4a4a4" stroke="#f4f4f4" stroke-width="0.7"/><rect x="5.4" y="5.4" width="9.4" height="9.4" fill="#a4a4a4" stroke="#f4f4f4" stroke-width="0.7"/><rect x="7.6" y="5.8" width="5" height="2.2" fill="#f0f0f0"/><rect x="4.8" y="3.2" width="5" height="1.6" fill="#f0f0f0"/><rect x="2.6" y="1" width="5" height="1.4" fill="#f0f0f0"/></svg>
<svg style="left:84px;top:172px;" width="16" height="16" viewBox="0 0 16 16"><path d="M1.4 0.6 h8 l3 3 v10.6 h-11Z" fill="#fbfbfb" stroke="#b4b4b4" stroke-width="0.9"/><path d="M3.6 5 h5 M3.6 7.4 h6.6 M3.6 9.8 h5" stroke="#8f8f8f" stroke-width="1"/><circle cx="12" cy="12.2" r="3.1" fill="#ee7420"/><circle cx="12" cy="12.2" r="3.1" fill="none" stroke="#c85a10" stroke-width="0.5"/><rect x="10.1" y="11.6" width="3.8" height="1.3" fill="#fff"/></svg>
<svg style="left:107px;top:172px;" width="16" height="16" viewBox="0 0 16 16"><path d="M0.6 0.6 h5 l3 3 v7 h-8Z" fill="#fbfbfb" stroke="#b4b4b4" stroke-width="0.9"/><path d="M3.2 2.4 h5 l3 3 v7 h-8Z" fill="#fbfbfb" stroke="#b4b4b4" stroke-width="0.9"/><path d="M6 4.4 h5.4 l3 3 v7.6 h-8.4Z" fill="#fbfbfb" stroke="#b4b4b4" stroke-width="0.9"/><circle cx="12" cy="12.4" r="3.1" fill="#ee7420"/><circle cx="12" cy="12.4" r="3.1" fill="none" stroke="#c85a10" stroke-width="0.5"/><rect x="10.1" y="11.8" width="3.8" height="1.3" fill="#fff"/></svg>
<svg style="left:130px;top:172px;" width="16" height="16" viewBox="0 0 16 16"><path d="M4 0.4 h6 l3 3 v8.6 h-9Z" fill="#d9e8fc" stroke="#3d7bdc" stroke-width="1"/><path d="M10 0.4 v3 h3" fill="#eef5ff" stroke="#3d7bdc" stroke-width="0.7"/><path d="M0.6 7 q0 -1.2 1.2 -1.2 h12.4 q1.2 0 1.2 1.2 v6 h-14.8Z" fill="#9c9c9c" stroke="#6a6a6a" stroke-width="0.8"/><rect x="1.6" y="6.8" width="12.8" height="1.6" fill="#d8d8d8"/><rect x="3.6" y="10.6" width="8.8" height="4.8" fill="#f4f8ff" stroke="#4a86e0" stroke-width="0.9"/><rect x="1" y="11" width="2.2" height="1.6" fill="#444"/><rect x="12.8" y="11" width="2.2" height="1.6" fill="#444"/></svg>
<div style="left:152px;top:171px;width:1.25px;height:18px;background:#747474;"></div>
<svg style="left:161px;top:172px;" width="16" height="16" viewBox="0 0 16 16"><path d="M6.2 0.4 L8.2 9.8 M12.4 2.4 L6 10.6" stroke="#6a9ade" stroke-width="1.3" fill="none"/><path d="M6.4 1 L7.6 6.4" stroke="#c4d8f2" stroke-width="0.7"/><ellipse cx="3.8" cy="11.6" rx="1.9" ry="2.2" fill="none" stroke="#d8382c" stroke-width="1.3" transform="rotate(-30 3.8 11.6)"/><ellipse cx="9" cy="12.8" rx="1.7" ry="2.3" fill="none" stroke="#d8382c" stroke-width="1.3" transform="rotate(-15 9 12.8)"/></svg>
<svg style="left:184px;top:172px;" width="16" height="16" viewBox="0 0 16 16"><path d="M0.6 0.6 h6 l3 3 v7.6 h-9Z" fill="#d9e8fc" stroke="#3d7bdc" stroke-width="1"/><path d="M6.6 0.6 v3 h3" fill="#eef5ff" stroke="#3d7bdc" stroke-width="0.7"/><path d="M6.4 4.2 h6 l3 3 v7.8 h-9Z" fill="#d9e8fc" stroke="#3d7bdc" stroke-width="1"/><path d="M12.4 4.2 v3 h3" fill="#eef5ff" stroke="#3d7bdc" stroke-width="0.7"/></svg>
<svg style="left:207px;top:172px;" width="16" height="16" viewBox="0 0 16 16"><rect x="0.6" y="1.8" width="11.4" height="13.4" rx="1" fill="#cf8c3a" stroke="#a8641c" stroke-width="0.9"/><rect x="1.8" y="3.4" width="9" height="11" fill="#e6ac62"/><rect x="3.6" y="0.4" width="5.4" height="2.8" rx="0.8" fill="#f0c060" stroke="#a8641c" stroke-width="0.7"/><path d="M6.6 5 h6 l3 3 v7.4 h-9Z" fill="#d9e8fc" stroke="#3d7bdc" stroke-width="1"/><path d="M12.6 5 v3 h3" fill="#eef5ff" stroke="#3d7bdc" stroke-width="0.7"/></svg>
<div style="left:229px;top:171px;width:1.25px;height:18px;background:#747474;"></div>
<svg style="left:238px;top:172px;" width="16" height="16" viewBox="0 0 16 16"><path d="M3 4.4 H8.6 C13.6 4.4 13.6 11.4 8.6 11.4 H6.4" fill="none" stroke="#a0a0a0" stroke-width="3.6"/><path d="M0.8 11.4 L6.8 7 V15.4Z" fill="#a0a0a0"/></svg>
<svg style="left:261px;top:172px;" width="16" height="16" viewBox="0 0 16 16"><path d="M9 12.4 H7.4 C2 12.4 2 5.4 7.4 5.4 H10" fill="none" stroke="#a0a0a0" stroke-width="3.6"/><path d="M15.2 5.4 L9.4 1.4 V9.6Z" fill="#a0a0a0"/><rect x="7" y="10.6" width="7.6" height="3.6" fill="#a0a0a0"/></svg>
<div style="left:283px;top:171px;width:1.25px;height:18px;background:#747474;"></div>
<svg style="left:292px;top:172px;" width="16" height="16" viewBox="0 0 16 16"><path d="M1 6.4 L2.6 3.6 H5.8 L6.6 6 H8.4 L9.2 3.6 H12.4 L14 6.4 V13.6 H8.6 V9.4 H6.4 V13.6 H1Z" fill="#181b20"/><rect x="2.8" y="2.6" width="2.8" height="1.4" fill="#181b20"/><rect x="9.4" y="2.6" width="2.8" height="1.4" fill="#181b20"/><rect x="2.2" y="9" width="3" height="3.4" fill="#a4acb8"/><rect x="9.8" y="9" width="3" height="3.4" fill="#a4acb8"/><path d="M3.4 5 h1.6 M10 5 h1.6" stroke="#7ab0ea" stroke-width="1.1"/></svg>
<svg style="left:315px;top:172px;" width="16" height="16" viewBox="0 0 16 16"><text x="0" y="8" font-family="Liberation Sans,sans-serif" font-style="italic" font-weight="bold" font-size="11.5" fill="#2f7de0">b</text><text x="6.6" y="15.6" font-family="Liberation Sans,sans-serif" font-style="italic" font-weight="bold" font-size="13.5" fill="#2f7de0">a</text><path d="M5.4 6.6 L8.8 9.8" stroke="#2aa04a" stroke-width="1.7"/><path d="M10.4 11.4 L6 10.8 L9.4 7.4Z" fill="#2aa04a"/></svg>
<div style="left:337px;top:171px;width:1.25px;height:18px;background:#747474;"></div>
<svg style="left:346px;top:173px;" width="16" height="16" viewBox="0 0 16 16"><path d="M9.4 9.2 L13.4 13.2" stroke="#c89654" stroke-width="2.6" stroke-linecap="round"/><circle cx="5.6" cy="5.6" r="5" fill="#d4e6fa" stroke="#a6c2e6" stroke-width="1"/><circle cx="4.6" cy="4.6" r="2.6" fill="#e8f2fd"/><path d="M7 5.8 h6.4 M10.2 2.6 v6.4" stroke="#3a9a3a" stroke-width="2.2"/></svg>
<svg style="left:369px;top:173px;" width="16" height="16" viewBox="0 0 16 16"><path d="M9.4 9.2 L13.4 13.2" stroke="#c89654" stroke-width="2.6" stroke-linecap="round"/><circle cx="5.6" cy="5.6" r="5" fill="#d4e6fa" stroke="#a6c2e6" stroke-width="1"/><circle cx="4.6" cy="4.6" r="2.6" fill="#e8f2fd"/><rect x="6.6" y="4.2" width="7.2" height="3" fill="#e8203a"/><rect x="7.4" y="5.2" width="5.6" height="0.9" fill="#ff9aa6"/></svg>
<div style="left:391px;top:171px;width:1.25px;height:18px;background:#747474;"></div>
<svg style="left:400px;top:172px;" width="16" height="16" viewBox="0 0 16 16"><rect x="0.5" y="0.6" width="13.6" height="11.6" fill="#fdfdff" stroke="#4a82d8" stroke-width="1"/><rect x="0.5" y="0.6" width="13.6" height="2.2" fill="#6a9ce6"/><path d="M5.4 2.8 V12.2" stroke="#4a82d8" stroke-width="1"/><path d="M8.2 9.2 v-1.6 a2.6 2.6 0 0 1 5.2 0 v1.6" fill="none" stroke="#9a9a9a" stroke-width="1.5"/><rect x="6.2" y="8.8" width="9.2" height="6.6" rx="0.8" fill="#f0b85a" stroke="#d08a28" stroke-width="0.7"/><rect x="7.2" y="9.600000000000001" width="7.2" height="2" fill="#f9d796"/></svg>
<svg style="left:423px;top:172px;" width="16" height="16" viewBox="0 0 16 16"><rect x="0.5" y="0.6" width="13.6" height="11.6" fill="#fdfdff" stroke="#4a82d8" stroke-width="1"/><rect x="0.5" y="0.6" width="13.6" height="2.2" fill="#6a9ce6"/><path d="M0.5 7.4 H14" stroke="#4a82d8" stroke-width="1"/><path d="M8.2 9.2 v-1.6 a2.6 2.6 0 0 1 5.2 0 v1.6" fill="none" stroke="#9a9a9a" stroke-width="1.5"/><rect x="6.2" y="8.8" width="9.2" height="6.6" rx="0.8" fill="#f0b85a" stroke="#d08a28" stroke-width="0.7"/><rect x="7.2" y="9.600000000000001" width="7.2" height="2" fill="#f9d796"/></svg>
<div style="left:445px;top:171px;width:1.25px;height:18px;background:#747474;"></div>
<svg style="left:454px;top:172px;" width="16" height="16" viewBox="0 0 16 16"><path d="M0.2 2.4 H9.4 M0.2 4.5 H9.4 M0.2 7.6 H6" stroke="#101010" stroke-width="1.1"/><rect x="0.2" y="11.4" width="9.8" height="2.6" fill="#8ab8f2"/><path d="M8.4 7.6 H15.8 V12.6 H13.4" fill="none" stroke="#3a74d0" stroke-width="1.1"/><path d="M10.8 12.6 L14 10.2 V15Z" fill="#3a74d0"/></svg>
<svg style="left:477px;top:172px;" width="16" height="16" viewBox="0 0 16 16"><text x="2.8" y="12" font-family="Liberation Sans,sans-serif" font-weight="bold" font-size="14" fill="#4e90e8">¶</text></svg>
<div style="left:497px;top:169px;width:23px;height:21px;background:#cce8ff;border:1px solid #92cdfb;box-sizing:border-box;"></div>
<svg style="left:500px;top:172px;" width="16" height="16" viewBox="0 0 16 16"><path d="M3 1.5 H7 M8.3 1.5 H17 M3 11.6 H17" stroke="#0a12f0" stroke-width="1.4"/><path d="M8.3 3.6 H12" stroke="#0a12f0" stroke-width="1"/><path d="M8.3 6 H17 M8.3 9 H14" stroke="#0a12f0" stroke-width="2.2"/><path d="M3 13.7 H6.4 M8.3 13.7 H10.4" stroke="#0a12f0" stroke-width="1.2"/><path d="M8.3 0.8 V14.4" stroke="#0a12f0" stroke-width="1.2"/><rect x="7.7" y="15" width="1.2" height="1.2" fill="#0a12f0"/><path d="M5.5 3 V10.4" stroke="#e81010" stroke-width="1.3" stroke-dasharray="1.1 0.9"/></svg>
<svg style="left:523px;top:172px;" width="16" height="16" viewBox="0 0 16 16"><rect x="0.5" y="1" width="14.6" height="12.8" fill="#fbfcff" stroke="#5a86cc" stroke-width="1"/><rect x="0.5" y="1" width="14.6" height="2.4" fill="#7aa2e0"/><path d="M10.6 3.8 L4 9.2 H7.4 L5 14.8 L12.6 7.6 H9Z" fill="#f3b84a" stroke="#d89428" stroke-width="0.6"/></svg>
<svg style="left:546px;top:172px;" width="16" height="16" viewBox="0 0 16 16"><rect x="0.6" y="0.6" width="14.8" height="14.6" rx="1.2" fill="#e9d9a4" stroke="#5a5a5a" stroke-width="1.2"/><path d="M1.4 9 L6 6 L6 14.4 H1.4Z" fill="#9ccc7a"/><path d="M8.6 1.4 H14.6 V7 L10 5Z" fill="#9cc4ee"/><path d="M9 9 H14.6 V14.4 H10Z" fill="#b8d890"/><path d="M3.4 1.4 L12.6 14.4 M1.4 10.6 L14.6 7.6 M9.4 1.4 L8.2 14.4" stroke="#e85040" stroke-width="1.1"/></svg>
<svg style="left:569px;top:172px;" width="16" height="16" viewBox="0 0 16 16"><rect x="0.5" y="0.8" width="10.8" height="9.6" fill="#e6effc" stroke="#4a80d4" stroke-width="1"/><rect x="0.5" y="0.8" width="10.8" height="2" fill="#6a9ae2"/><path d="M3.4 4.2 h6 l3 3 v7.6 h-9Z" fill="#d9e8fc" stroke="#3d7bdc" stroke-width="1"/><path d="M9.4 4.2 v3 h3" fill="#eef5ff" stroke="#3d7bdc" stroke-width="0.7"/><path d="M7.2 5.8 h5 l3 3 v6.8 h-9Z" fill="#d9e8fc" stroke="#3d7bdc" stroke-width="1"/><path d="M13.2 5.8 v3 h3" fill="#eef5ff" stroke="#3d7bdc" stroke-width="0.7"/></svg>
<svg style="left:592px;top:172px;" width="16" height="16" viewBox="0 0 16 16"><path d="M3.4 0.8 H11 L15 4.8 V15 H3.4Z" fill="#fcfcfc" stroke="#6a6a6a" stroke-width="1"/><path d="M11 0.8 V4.8 H15" fill="none" stroke="#6a6a6a" stroke-width="0.8"/><path d="M10.4 8 V9 M12.6 8 V9 M10.4 11 V12 M12.6 11 V12" stroke="#555" stroke-width="1"/><path d="M8.4 2.6 C5.6 2.2 5.4 5 5 8 L3.6 13.6 C3.2 15.2 1.4 15 0.6 14" fill="none" stroke="#e02828" stroke-width="1.7"/><path d="M2.4 8 H7.6" stroke="#e02828" stroke-width="1.5"/></svg>
<svg style="left:615px;top:172px;" width="16" height="16" viewBox="0 0 16 16"><path d="M0.6 3.4 H5.6 L6.8 5 H14.6 V14 H0.6Z" fill="#f6c4c4" stroke="#e07a7a" stroke-width="1"/><path d="M1.4 7.4 H13.8" stroke="#fbe6e6" stroke-width="1.4"/><path d="M1.4 11.6 H13.8" stroke="#eea0a0" stroke-width="1.8"/></svg>
<svg style="left:638px;top:172px;" width="16" height="16" viewBox="0 0 16 16"><path d="M0.2 7.8 C4 1.6 12 1.6 15.8 7.8 C12 13.4 4 13.4 0.2 7.8Z" fill="#fbfbfb" stroke="#e9c79a" stroke-width="1"/><circle cx="8" cy="7.4" r="3.9" fill="#4a8ee0"/><circle cx="8" cy="7.4" r="1.8" fill="#123a7a"/><circle cx="6.8" cy="6.2" r="0.9" fill="#dff"/></svg>
<div style="left:660px;top:171px;width:1.25px;height:18px;background:#747474;"></div>
<svg style="left:669px;top:172px;" width="16" height="16" viewBox="0 0 16 16"><rect x="1.4" y="1.4" width="12.4" height="12.4" fill="#fdfdfd" stroke="#9c9c9c" stroke-width="1"/><circle cx="7.6" cy="7.6" r="3.7" fill="#d40000"/></svg>
<svg style="left:692px;top:172px;" width="16" height="16" viewBox="0 0 16 16"><rect x="1.4" y="1.4" width="12.4" height="12.4" fill="#fdfdfd" stroke="#9c9c9c" stroke-width="1"/><rect x="4" y="4" width="7.2" height="7.2" fill="#a8a8a8"/></svg>
<svg style="left:715px;top:172px;" width="16" height="16" viewBox="0 0 16 16"><rect x="1.4" y="1.4" width="12.4" height="12.4" fill="#fdfdfd" stroke="#9c9c9c" stroke-width="1"/><path d="M5 3.6 L11 7.6 L5 11.6Z" fill="#a8a8a8"/></svg>
<svg style="left:738px;top:172px;" width="16" height="16" viewBox="0 0 16 16"><rect x="1.4" y="1.4" width="12.4" height="12.4" fill="#fdfdfd" stroke="#8a8a8a" stroke-width="1"/><path d="M3.2 3.6 L8 7.6 L3.2 11.6Z M8 3.6 L12.8 7.6 L8 11.6Z" fill="#3a78e0"/></svg>
<svg style="left:761px;top:172px;" width="16" height="16" viewBox="0 0 16 16"><rect x="0.4" y="0.4" width="12" height="12" fill="#a6a6a6"/><rect x="2.2" y="2.2" width="8.4" height="2" fill="#ececec"/><path d="M2.2 6 h8.4 M2.2 8 h4 M2.2 10 h4" stroke="#e4e4e4" stroke-width="0.9" stroke-dasharray="1.4 0.8"/><rect x="6.4" y="6.4" width="9.2" height="9.2" fill="#a0a0a0" stroke="#f2f2f2" stroke-width="0.6"/><rect x="8.6" y="7" width="5" height="2.6" fill="#ececec"/></svg>
<div style="left:783px;top:171px;width:1.25px;height:18px;background:#747474;"></div>
<svg style="left:792px;top:172px;" width="16" height="16" viewBox="0 0 16 16"><path d="M0.6 0.8 H15.4 V11 H10.4 L8 14.8 L5.6 11 H0.6Z" fill="#fbfdff" stroke="#2f6fd6" stroke-width="1.2"/><rect x="0.6" y="0.8" width="14.8" height="1.6" fill="#5a92e8"/><path d="M6.4 5 L8.2 3.8 V8.4" stroke="#e01818" stroke-width="1.7" fill="none"/><path d="M5.4 9.2 H11" stroke="#1a9a2a" stroke-width="1.8"/></svg>
<svg style="left:815px;top:172px;" width="16" height="16" viewBox="0 0 16 16"><rect x="0.6" y="0.8" width="14.8" height="13.2" fill="#fbfdff" stroke="#2f6fd6" stroke-width="1.2"/><rect x="0.6" y="0.8" width="14.8" height="2.6" fill="#5a92e8"/><path d="M2.6 6.2 H7 M9 6.2 H13.4" stroke="#e02020" stroke-width="1.7"/><path d="M2.6 10 H7 M9 10 H13.4" stroke="#18a030" stroke-width="1.7"/></svg>
<svg style="left:838px;top:172px;" width="16" height="16" viewBox="0 0 16 16"><rect x="0.6" y="0.8" width="14.8" height="13.2" fill="#fbfdff" stroke="#2f6fd6" stroke-width="1.2"/><rect x="0.6" y="0.8" width="14.8" height="2.6" fill="#5a92e8"/><path d="M2.6 6.2 H7 M9 6.2 H13.4" stroke="#e02020" stroke-width="1.7"/><path d="M2.6 10 H7 M9 10 H13.4" stroke="#18a030" stroke-width="1.7"/><circle cx="11.4" cy="12.2" r="3.2" fill="#c8281c"/><rect x="9.4" y="11.6" width="4" height="1.2" fill="#fff"/></svg>
<svg style="left:861px;top:172px;" width="16" height="16" viewBox="0 0 16 16"><rect x="1.4" y="3" width="12.6" height="2" fill="#2f6fd0"/><path d="M2 5 H13.4 L7.7 9.2Z" fill="#5a90e2"/><path d="M7.7 7.6 L13.6 12.8 H1.8Z" fill="#2f6fd0"/><path d="M7.7 9 L11.4 12 H4Z" fill="#7aa8ec"/></svg>
<svg style="left:884px;top:172px;" width="16" height="16" viewBox="0 0 16 16"><path d="M8 3.8 L14.2 10.8 H1.8Z" fill="#2f6fd0"/><path d="M8 5.8 L11.6 9.8 H4.4Z" fill="#7aa8ec"/></svg>
<svg style="left:907px;top:172px;" width="16" height="16" viewBox="0 0 16 16"><path d="M8 11 L14.2 4 H1.8Z" fill="#2f6fd0"/><path d="M8 9 L11.6 5 H4.4Z" fill="#7aa8ec"/></svg>
<svg style="left:930px;top:172px;" width="16" height="16" viewBox="0 0 16 16"><rect x="1.4" y="10.8" width="12.6" height="2" fill="#2f6fd0"/><path d="M2 10.8 H13.4 L7.7 6.6Z" fill="#5a90e2"/><path d="M7.7 8.2 L13.6 3 H1.8Z" fill="#2f6fd0"/><path d="M7.7 6.8 L11.4 3.8 H4Z" fill="#7aa8ec"/></svg>
<svg style="left:953px;top:172px;" width="16" height="16" viewBox="0 0 16 16"><rect x="0.6" y="0.8" width="14.8" height="13.2" fill="#fbfdff" stroke="#2f6fd6" stroke-width="1.2"/><rect x="0.6" y="0.8" width="14.8" height="2.6" fill="#5a92e8"/><rect x="10.2" y="3.4" width="4.6" height="10" fill="#f6c878"/><path d="M2.6 6.4 H8" stroke="#e02020" stroke-width="1.9"/><path d="M2.6 10.4 H8" stroke="#18a030" stroke-width="1.9"/><rect x="11.6" y="5.4" width="1.8" height="1.8" fill="#e02020"/><rect x="11.6" y="9.4" width="1.8" height="1.8" fill="#e02020"/></svg>
<svg style="left:976px;top:172px;" width="16" height="16" viewBox="0 0 16 16"><circle cx="7.4" cy="8.8" r="7.4" fill="#111"/><circle cx="8.4" cy="8" r="7.5" fill="#f8ee10"/><rect x="7.4" y="5.4" width="1.6" height="2.4" fill="#111"/><rect x="11.6" y="5.4" width="1.6" height="2.4" fill="#111"/><path d="M4.6 10.4 Q9.4 14.6 14 10.2" fill="none" stroke="#111" stroke-width="1.5"/></svg>
<svg style="left:999px;top:172px;" width="16" height="16" viewBox="0 0 16 16"><rect x="0" y="0.2" width="16" height="15.6" fill="#b0b0b0"/><path d="M2 1.2 H11.4 L14.2 4 V14.8 H2Z" fill="#fdfdfd"/><path d="M4.4 5.6 L1.6 9 L4.4 12.4 M11.6 5.6 L14.4 9 L11.6 12.4" fill="none" stroke="#1a7ae0" stroke-width="1.3"/><circle cx="8" cy="9" r="2.2" fill="none" stroke="#1a7ae0" stroke-width="1.1"/><path d="M6 9 H10" stroke="#1a7ae0" stroke-width="0.9"/></svg>
<div style="left:0px;top:193px;width:1344px;height:1px;background:#d4d4d4;"></div>
<div style="left:0px;top:217px;width:1342px;height:2px;background:#6e6e6e;"></div>
<div style="left:319px;top:196px;width:237.5px;height:4px;background:#f5a332;"></div>
<div style="left:556.5px;top:196px;width:1.3px;height:21px;background:#5a5a5a;"></div>
<div style="left:141px;top:197px;width:1.3px;height:20px;background:#4a4a4a;"></div>
<svg style="left:-11px;top:200px;" width="20" height="16" viewBox="0 0 20 16"><path d="M1.2 8.6 L4.2 5.8 L7.4 9.6 L17 0.8 L19.2 3.6 L7.2 15 Z" fill="#4f9ad0" stroke="#3b7fb4" stroke-width="0.9" stroke-linejoin="round"/></svg>
<svg style="left:143.5px;top:200px;" width="20" height="16" viewBox="0 0 20 16"><path d="M1.2 8.6 L4.2 5.8 L7.4 9.6 L17 0.8 L19.2 3.6 L7.2 15 Z" fill="#4f9ad0" stroke="#3b7fb4" stroke-width="0.9" stroke-linejoin="round"/></svg>
<svg style="left:319px;top:200.3px;" width="20" height="16" viewBox="0 0 20 16"><path d="M1.2 8.6 L4.2 5.8 L7.4 9.6 L17 0.8 L19.2 3.6 L7.2 15 Z" fill="#58cc58" stroke="#3fa43f" stroke-width="0.9" stroke-linejoin="round"/></svg>
<div id="dt1" style="left:13.70px;top:199.5px;height:17px;line-height:17px;font-size:13.33px;color:#848484;letter-spacing:0.015px;font-weight:bold;">userChrome.css</div>
<div id="dt2" style="left:166.40px;top:199.5px;height:17px;line-height:17px;font-size:13.33px;color:#848484;letter-spacing:0.070px;font-weight:bold;">ScrollbarPfeile.uc.js</div>
<div id="dt3" style="left:342.65px;top:199.5px;height:17px;line-height:17px;font-size:13.33px;color:#000;letter-spacing:0.027px;font-weight:bold;">Kontextmenu-Rechtsklick.css</div>
<svg style="left:127px;top:202.5px;" width="11" height="10" viewBox="0 0 11 10"><rect width="11" height="10" fill="#8c8c8c"/><path d="M2.6 2.2 L8.4 7.8 M8.4 2.2 L2.6 7.8" stroke="#d8d8d8" stroke-width="1.7"/></svg>
<svg style="left:304.3px;top:202.5px;" width="11" height="10" viewBox="0 0 11 10"><rect width="11" height="10" fill="#8c8c8c"/><path d="M2.6 2.2 L8.4 7.8 M8.4 2.2 L2.6 7.8" stroke="#d8d8d8" stroke-width="1.7"/></svg>
<svg style="left:541.3px;top:202.5px;" width="11" height="10" viewBox="0 0 11 10"><rect width="11" height="10" fill="#9c2c58"/><path d="M2.6 2.2 L8.4 7.8 M8.4 2.2 L2.6 7.8" stroke="#fff" stroke-width="1.7"/></svg>
<div class="ln" style="top:219.6px;height:16px;">10</div>
<div class="ln" style="top:235.6px;height:16px;">11</div>
<div class="ln" style="top:251.6px;height:16px;">12</div>
<div class="ln" style="top:267.6px;height:16px;">13</div>
<div class="ln" style="top:283.6px;height:16px;">14</div>
<div class="ln" style="top:299.6px;height:16px;">15</div>
<div class="ln" style="top:315.6px;height:16px;">16</div>
<div class="ln" style="top:331.6px;height:16px;">17</div>
<div class="ln" style="top:347.6px;height:16px;">18</div>
<div class="ln" style="top:363.6px;height:16px;">19</div>
<div class="ln" style="top:379.6px;height:16px;">20</div>
<div class="ln" style="top:395.6px;height:16px;">21</div>
<div class="ln" style="top:411.6px;height:16px;">22</div>
<div class="ln" style="top:427.6px;height:16px;">23</div>
<div class="ln" style="top:443.6px;height:16px;">24</div>
<div class="ln" style="top:459.6px;height:16px;">25</div>
<div class="ln" style="top:475.6px;height:16px;">26</div>
<div class="ln" style="top:491.6px;height:16px;">27</div>
<div class="ln" style="top:507.6px;height:16px;">28</div>
<div class="ln" style="top:523.6px;height:16px;">29</div>
<div class="ln" style="top:539.6px;height:16px;">30</div>
<div class="ln" style="top:555.6px;height:16px;">31</div>
<div class="ln" style="top:571.6px;height:5.4px;">32</div>
<svg style="left:40px;top:273px;" width="10" height="5" viewBox="0 0 10 5"><path d="M0.2 0 H9.4 L4.8 4.8Z" fill="#7c7c7c"/></svg>
<svg style="left:40px;top:321px;" width="10" height="5" viewBox="0 0 10 5"><path d="M0.2 0 H9.4 L4.8 4.8Z" fill="#7c7c7c"/></svg>
<svg style="left:40px;top:513px;" width="10" height="5" viewBox="0 0 10 5"><path d="M0.2 0 H9.4 L4.8 4.8Z" fill="#7c7c7c"/></svg>
<div style="left:51px;top:523px;width:612px;height:16px;background:#cbcbcb;"></div>
<div id="codeclip" style="left:51px;top:523px;width:760px;height:16px;overflow:hidden;"><div id="code" style="left:-4.4px;top:0.6px;">7aGE/xPSZu9AsYDeB0/rNcVAs5zus4AB72A5YF6/hPr5j8s8AJhtARQdcQD4AAAAASUVORK5CYII=<span class="k">")</span> <span class="k">!</span><span class="r">important</span><span class="k">;</span></div></div>
<svg style="left:1329px;top:224px;" width="9" height="7" viewBox="0 0 9 7"><path d="M0.8 6 L4.4 1.6 L8 6" fill="none" stroke="#5e5e5e" stroke-width="1.9"/></svg>
<div style="left:1327px;top:241px;width:14px;height:17px;background:#cdcdcd;"></div>
<svg style="left:1329.5px;top:566.5px;" width="9" height="7" viewBox="0 0 9 7"><path d="M0.8 1 L4.4 5.4 L8 1" fill="none" stroke="#5e5e5e" stroke-width="1.9"/></svg>
<div style="left:1137px;top:579px;width:44px;height:15px;background:#a6a6a6;"></div>
<svg style="left:1313.5px;top:582.5px;" width="7" height="9" viewBox="0 0 7 9"><path d="M1 0.8 L5.4 4.4 L1 8" fill="none" stroke="#5e5e5e" stroke-width="1.9"/></svg>
<div style="left:0px;top:597px;width:1344px;height:1px;background:#d9d9d9;"></div>
<div style="left:583.5px;top:600px;width:1px;height:19px;background:#d2d2d2;"></div>
<div style="left:803.5px;top:600px;width:1px;height:19px;background:#d2d2d2;"></div>
<div style="left:1063.5px;top:600px;width:1px;height:19px;background:#d2d2d2;"></div>
<div style="left:1173.3px;top:600px;width:1px;height:19px;background:#d2d2d2;"></div>
<div style="left:1293.5px;top:600px;width:1px;height:19px;background:#d2d2d2;"></div>
<div style="left:1323.3px;top:600px;width:1px;height:19px;background:#d2d2d2;"></div>
<div id="s0" style="right:1227.95px;top:599.6px;height:20px;line-height:20px;font-size:11.7px;color:#0c0c0c;letter-spacing:-0.250px;font-weight:normal;">Cascade Style Sheets File</div>
<div id="s1" style="left:588.70px;top:599.6px;height:20px;line-height:20px;font-size:11.7px;color:#0c0c0c;letter-spacing:-0.053px;font-weight:normal;">length : 116'292</div>
<div id="s2" style="left:682.15px;top:599.6px;height:20px;line-height:20px;font-size:11.7px;color:#0c0c0c;letter-spacing:-0.310px;font-weight:normal;">lines : 568</div>
<div id="s3" style="left:807.90px;top:599.6px;height:20px;line-height:20px;font-size:11.7px;color:#0c0c0c;letter-spacing:-0.300px;font-weight:normal;">Ln : 29</div>
<div id="s4" style="left:854.50px;top:599.6px;height:20px;line-height:20px;font-size:11.7px;color:#0c0c0c;letter-spacing:-0.314px;font-weight:normal;">Col : 22</div>
<div id="s5" style="left:904.60px;top:599.6px;height:20px;line-height:20px;font-size:11.7px;color:#0c0c0c;letter-spacing:-0.386px;font-weight:normal;">Sel : 4'102 | 1</div>
<div id="s6" style="left:1069.30px;top:599.6px;height:20px;line-height:20px;font-size:11.7px;color:#0c0c0c;letter-spacing:-0.200px;font-weight:normal;">Windows (CR LF)</div>
<div id="s7" style="left:1178.30px;top:599.6px;height:20px;line-height:20px;font-size:11.7px;color:#0c0c0c;letter-spacing:-0.550px;font-weight:normal;">UTF-8</div>
<div id="s8" style="left:1298.40px;top:599.6px;height:20px;line-height:20px;font-size:11.7px;color:#0c0c0c;letter-spacing:-0.800px;font-weight:normal;">INS</div>
<div style="left:1340px;top:610px;width:2px;height:2px;background:#8a8a8a;"></div>
<div style="left:1337px;top:613px;width:2px;height:2px;background:#8a8a8a;"></div>
<div style="left:1340px;top:613px;width:2px;height:2px;background:#8a8a8a;"></div>
<div style="left:1334px;top:616px;width:2px;height:2px;background:#8a8a8a;"></div>
<div style="left:1337px;top:616px;width:2px;height:2px;background:#8a8a8a;"></div>
<div style="left:1340px;top:616px;width:2px;height:2px;background:#8a8a8a;"></div>
<div style="left:1344px;top:118px;width:1px;height:503px;background:#3d0cff;"></div>
<div style="left:0px;top:620px;width:1345px;height:1px;background:#3d0cff;"></div>
<svg style="left:1148px;top:585px;" width="34" height="34" viewBox="0 0 34 34"><path d="M12.6 3.6 C15.6 2 19.6 2.2 22.4 3.4 C24.6 4.4 26.4 6 27 8.2 C25.6 7 23.8 7 22.6 8.4 C26.4 9 29.8 11.6 31.8 16.6 C30 15 28 14.8 26.8 16 C30 19 31.4 22.4 31 26 C31.2 28.4 31.8 30.6 33 32.6 C29.4 32.6 26.6 31 25 28.2 C24 29.2 23.8 30.6 24.4 32 C21.4 32 18.8 30.6 17.6 28 C16.6 28.6 16.2 30 16.6 31.6 C13.8 30.4 12.2 28 12.4 25.2 C10.8 25.4 9.8 26.4 9.6 27.8 C7 26.4 5.8 23.6 6.4 20.8 C4 19.4 2.6 16.8 3 14.4 L6 12 L12 6Z" fill="#ff1408"/>
<path d="M14 6 C17 4.8 20.6 5.2 22.8 6.8 C21.6 7.2 21 8.2 21.2 9.4 C24.6 10.4 27.4 12.6 28.6 15.4 C27 14.6 25.4 15 24.8 16.4 C27.6 19 29 22.2 28.6 25.2 C28.8 27 29.2 28.6 30 30 C27.6 29.4 26 28 25 26 C23.6 26.4 22.8 27.6 22.8 29 C20.6 28 19.2 26.2 19 24.2 C17.6 24.6 16.8 25.8 16.8 27.2 C14.8 25.8 14 23.6 14.4 21.6 C12.8 21.8 11.8 22.8 11.6 24 C9.8 22.6 9.2 20.4 9.8 18.4 C7.6 17.6 6.2 16 6 14.2 L9 12Z" fill="#ff8c10"/>
<path d="M13 11 C16 9.4 19.4 9.8 21 12 C23.6 12.6 25.6 14.6 25.8 17 C24.4 16.8 23.4 17.6 23.2 18.8 C25.4 21 26.4 23.6 26.4 26 C24.8 24.8 23.8 23.4 23.4 21.8 C22 22.2 21.2 23.4 21.2 24.6 C19.6 23.4 19 21.6 19.4 20 C17.8 20.2 16.8 21.2 16.6 22.4 C15 21 14.6 19 15.4 17.4 C13.4 17.2 11.8 16.4 11 15 C9.4 16.4 8.4 16.6 7.4 16 L10 13Z" fill="#fff214"/>
<path d="M1.9 2 L13.2 6.2 L11.4 8.2 L18.4 13.6 L13.8 18.4 L8 11.6 L5.8 13.6Z" fill="#0a0aa4" stroke="#5c5c6c" stroke-width="0.9" stroke-linejoin="round"/></svg>
</body>
</html>
